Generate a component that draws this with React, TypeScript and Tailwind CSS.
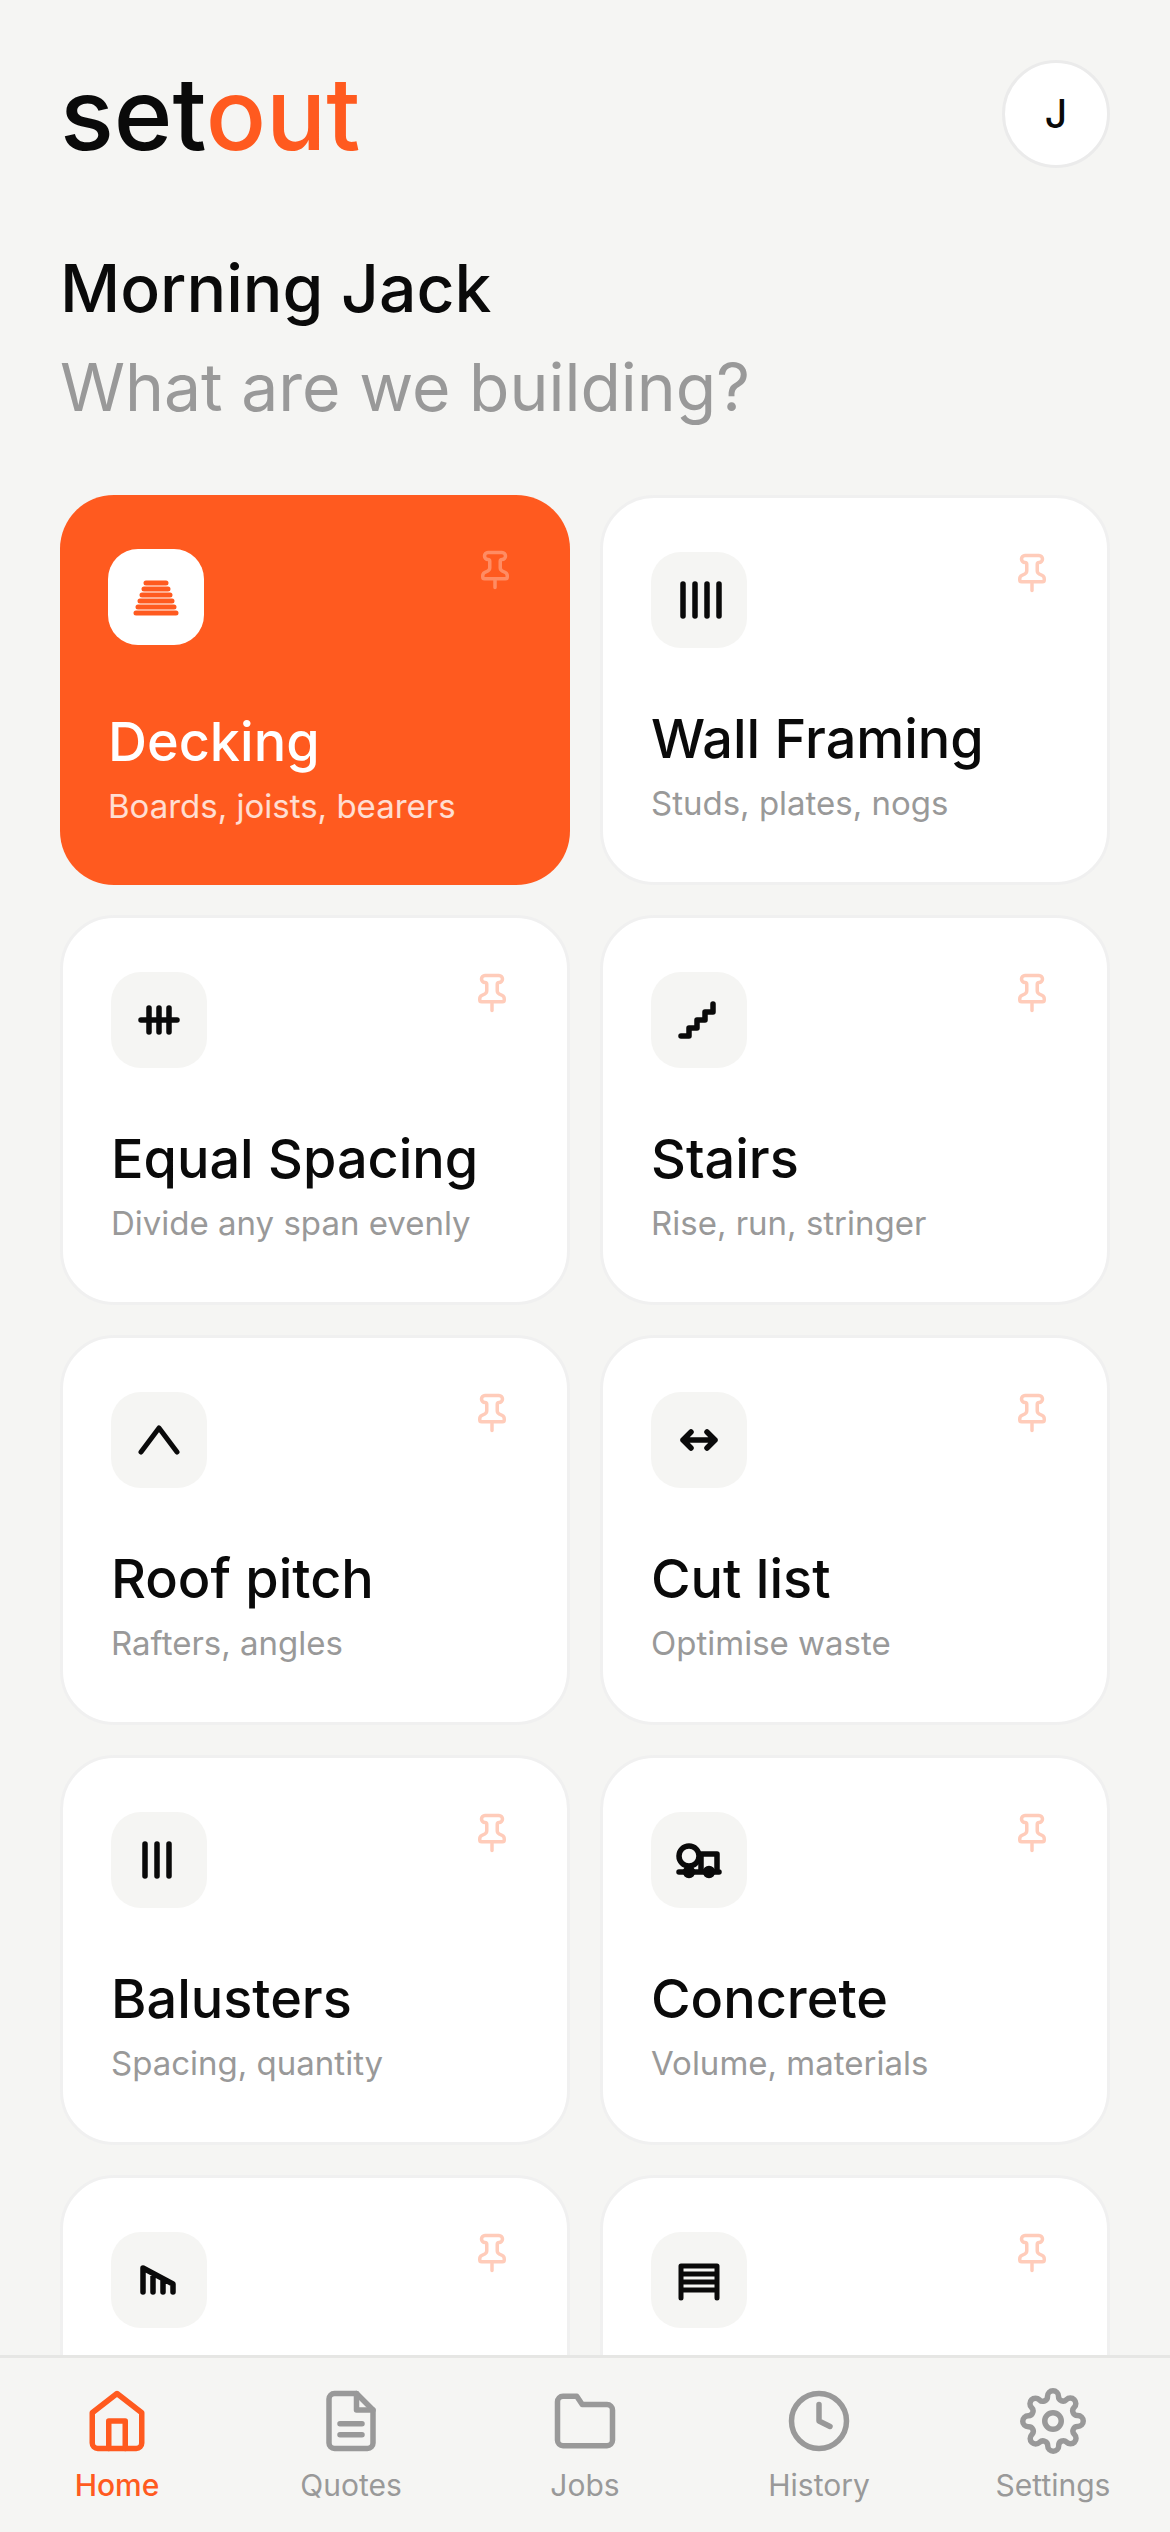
import React from "react";
import { clsx } from "clsx";

type Tool = {
  id: string;
  title?: string;
  subtitle?: string;
  icon: React.ReactNode;
  featured?: boolean;
};

const tools: Tool[] = [
  {
    id: "decking",
    title: "Decking",
    subtitle: "Boards, joists, bearers",
    featured: true,
    icon: <path d="M7 5h10M6 8h12M5 11h14M4 14h16M3 17h18M2 20h20" strokeWidth="2.5" />,
  },
  {
    id: "wall-framing",
    title: "Wall Framing",
    subtitle: "Studs, plates, nogs",
    icon: <path d="M4 4v16M10 4v16M16 4v16M22 4v16" />,
  },
  {
    id: "equal-spacing",
    title: "Equal Spacing",
    subtitle: "Divide any span evenly",
    icon: <path d="M3 12h18M7 6v12M12 6v12M17 6v12" />,
  },
  {
    id: "stairs",
    title: "Stairs",
    subtitle: "Rise, run, stringer",
    icon: <path d="M3 20h4v-4h4v-4h4V8h4V4" />,
  },
  {
    id: "roof-pitch",
    title: "Roof pitch",
    subtitle: "Rafters, angles",
    icon: <path d="M3 18L12 6l9 12" strokeWidth="2.5" />,
  },
  {
    id: "cut-list",
    title: "Cut list",
    subtitle: "Optimise waste",
    icon: <path d="M4 12h16M8 8l-4 4 4 4M16 8l4 4-4 4" />,
  },
  {
    id: "balusters",
    title: "Balusters",
    subtitle: "Spacing, quantity",
    icon: <path d="M5 4v16M11 4v16M17 4v16" />,
  },
  {
    id: "concrete",
    title: "Concrete",
    subtitle: "Volume, materials",
    icon: (
      <>
        <circle cx="7" cy="10" r="5" />
        <path d="M13 18V9h8v9M2 18h20" />
        <circle cx="7" cy="18" r="1.75" fill="currentColor" />
        <circle cx="17" cy="18" r="1.75" fill="currentColor" />
      </>
    ),
  },
  {
    id: "raking-wall",
    icon: <path d="M4 18V6l15 8v4M9 18V9M14 18v-6" />,
  },
  {
    id: "fencing",
    icon: <path d="M3 21V5h18v16M3 9h18M3 13h18M3 17h18" strokeWidth="2.5" />,
  },
];

const tabs = [
  {
    label: "Home",
    active: true,
    icon: (
      <>
        <path d="M3 9l9-7 9 7v11a2 2 0 0 1-2 2H5a2 2 0 0 1-2-2z" />
        <path d="M9 22V12h6v10" />
      </>
    ),
  },
  {
    label: "Quotes",
    icon: (
      <>
        <path d="M14 2H6a2 2 0 0 0-2 2v16a2 2 0 0 0 2 2h12a2 2 0 0 0 2-2V8z" />
        <path d="M14 2v6h6M16 13H8M16 17H8" />
      </>
    ),
  },
  {
    label: "Jobs",
    icon: (
      <path d="M22 19a2 2 0 0 1-2 2H4a2 2 0 0 1-2-2V5a2 2 0 0 1 2-2h5l2 3h9a2 2 0 0 1 2 2z" />
    ),
  },
  {
    label: "History",
    icon: (
      <>
        <circle cx="12" cy="12" r="10" />
        <path d="M12 6v6l4 2" />
      </>
    ),
  },
  {
    label: "Settings",
    icon: (
      <>
        <circle cx="12" cy="12" r="3" />
        <path d="M19.4 15a1.65 1.65 0 0 0 .33 1.82l.06.06a2 2 0 0 1 0 2.83 2 2 0 0 1-2.83 0l-.06-.06a1.65 1.65 0 0 0-1.82-.33 1.65 1.65 0 0 0-1 1.51V21a2 2 0 0 1-2 2 2 2 0 0 1-2-2v-.09A1.65 1.65 0 0 0 9 19.4a1.65 1.65 0 0 0-1.82.33l-.06.06a2 2 0 0 1-2.83 0 2 2 0 0 1 0-2.83l.06-.06a1.65 1.65 0 0 0 .33-1.82 1.65 1.65 0 0 0-1.51-1H3a2 2 0 0 1-2-2 2 2 0 0 1 2-2h.09A1.65 1.65 0 0 0 4.6 9a1.65 1.65 0 0 0-.33-1.82l-.06-.06a2 2 0 0 1 0-2.83 2 2 0 0 1 2.83 0l.06.06a1.65 1.65 0 0 0 1.82.33H9a1.65 1.65 0 0 0 1-1.51V3a2 2 0 0 1 2-2 2 2 0 0 1 2 2v.09a1.65 1.65 0 0 0 1 1.51 1.65 1.65 0 0 0 1.82-.33l.06-.06a2 2 0 0 1 2.83 0 2 2 0 0 1 0 2.83l-.06.06a1.65 1.65 0 0 0-.33 1.82V9a1.65 1.65 0 0 0 1.51 1H21a2 2 0 0 1 2 2 2 2 0 0 1-2 2h-.09a1.65 1.65 0 0 0-1.51 1z" />
      </>
    ),
  },
];

function Icon({
  children,
  className,
  stroke = 2,
}: {
  children: React.ReactNode;
  className?: string;
  stroke?: number;
}) {
  return (
    <svg
      viewBox="0 0 24 24"
      fill="none"
      stroke="currentColor"
      strokeWidth={stroke}
      strokeLinecap="round"
      strokeLinejoin="round"
      aria-hidden="true"
      className={className}
    >
      {children}
    </svg>
  );
}

function ToolCard({ tool }: { tool: Tool }) {
  return (
    <article
      className={clsx(
        "flex min-h-[390px] flex-col justify-between rounded-[54px] px-12 py-[54px]",
        tool.featured ? "bg-[#ff5a1f] text-white" : "border-3 border-[#f0f0f0] bg-white"
      )}
    >
      <div className="flex items-start justify-between">
        <div
          className={clsx(
            "flex size-24 items-center justify-center rounded-[30px]",
            tool.featured ? "bg-white text-[#ff5a1f]" : "bg-[#f5f5f3]"
          )}
        >
          <Icon className="size-12" stroke={2.75}>
            {tool.icon}
          </Icon>
        </div>
        <button
          type="button"
          aria-label="Pin"
          className={clsx("mr-1.5 opacity-30", tool.featured ? "text-white" : "text-[#ff5a1f]")}
        >
          <Icon className="size-[42px]">
            <path d="M12 17v5M9 10.76a2 2 0 0 1-1.11 1.79l-1.78.9A2 2 0 0 0 5 15.24V16a1 1 0 0 0 1 1h12a1 1 0 0 0 1-1v-.76a2 2 0 0 0-1.11-1.79l-1.78-.9A2 2 0 0 1 15 10.76V7a1 1 0 0 1 1-1 2 2 0 0 0 0-4H8a2 2 0 0 0 0 4 1 1 0 0 1 1 1z" />
          </Icon>
        </button>
      </div>

      {tool.title && (
        <div>
          <h2 className="text-[54px] leading-[66px] font-medium">{tool.title}</h2>
          <p
            className={clsx(
              "mt-1.5 text-[33px] leading-[50px]",
              tool.featured ? "text-white/80" : "text-[#999999]"
            )}
          >
            {tool.subtitle}
          </p>
        </div>
      )}
    </article>
  );
}

export default function App() {
  return (
    <div className="flex h-screen flex-col bg-[#f5f5f3] font-[Inter,sans-serif] text-[#0a0a0a]">
      <main className="min-h-0 flex-1 overflow-y-auto px-[60px] pt-[42px] pb-[60px] [scrollbar-width:none]">
        <header className="flex items-center justify-between">
          <div className="text-[100px] leading-[144px] font-medium">
            set<span className="text-[#ff5a1f]">out</span>
          </div>
          <button
            type="button"
            className="flex size-[108px] items-center justify-center rounded-full border-3 border-[#ebebeb] bg-white text-[39px] font-medium"
          >
            J
          </button>
        </header>

        <section className="mt-[53px] text-[66px] leading-[99px]">
          <h1 className="font-medium">Morning Jack</h1>
          <p className="text-[#999999]">What are we building?</p>
        </section>

        <section className="mt-[58px] grid grid-cols-2 gap-[30px]">
          {tools.map((tool) => (
            <ToolCard key={tool.id} tool={tool} />
          ))}
        </section>
      </main>

      <nav className="grid grid-cols-5 border-t-3 border-[#e6e6e4] pt-[30px] pb-6">
        {tabs.map((tab) => (
          <a
            key={tab.label}
            href="#"
            className={clsx(
              "flex flex-col items-center gap-[9px] text-[30px] leading-[45px]",
              tab.active ? "font-medium text-[#ff5a1f]" : "text-[#999999]"
            )}
          >
            <Icon className="size-[66px]">{tab.icon}</Icon>
            {tab.label}
          </a>
        ))}
      </nav>
    </div>
  );
}
